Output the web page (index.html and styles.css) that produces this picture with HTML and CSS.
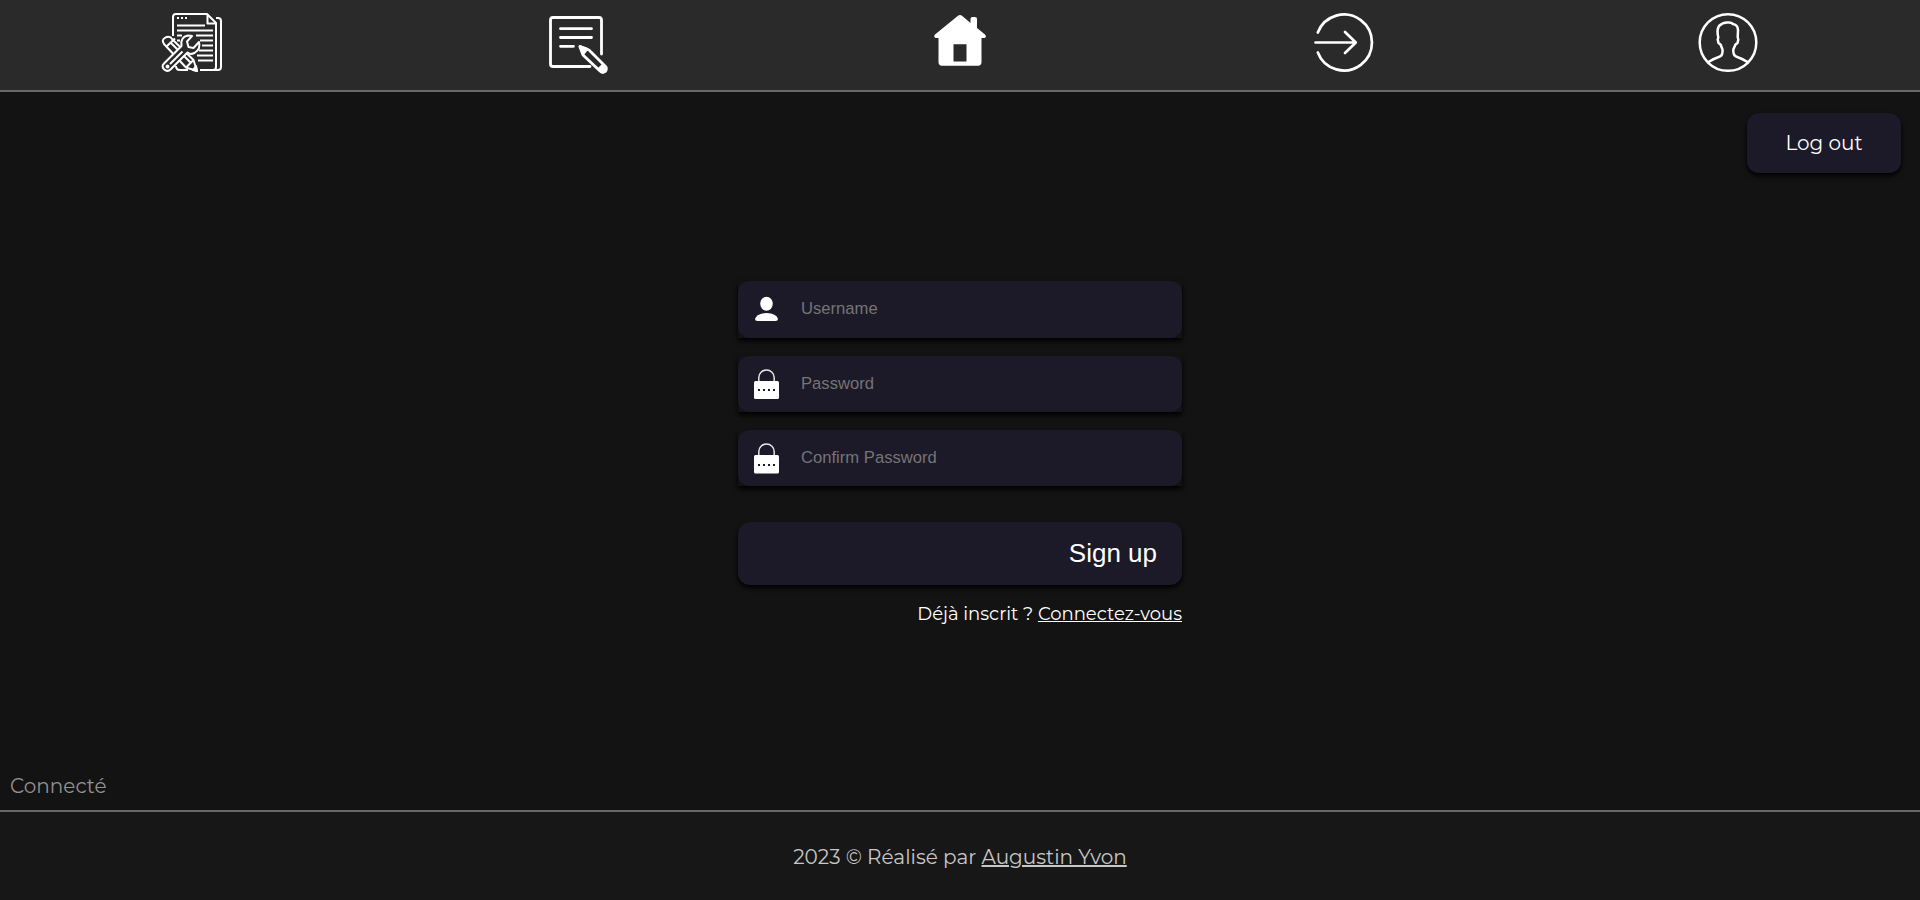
FILE: index.html
```html
<!DOCTYPE html>
<html lang="fr">
<head>
<meta charset="utf-8">
<title>Sign up</title>
<link rel="stylesheet" href="styles.css">
</head>
<body>
<nav class="nav">
  <a class="nav-item"><svg class="nav-icon" viewBox="-3 0 90 90">
    <g fill="none" stroke="#fff" stroke-width="2" stroke-linejoin="round">
      <path d="M23 36V17q0-3 3-3H57L66 23V67q0 3-3 3H50"/>
      <path d="M57.500 14V23.500H66"/><path d="M66 18H68q3 0 3 3V67q0 3-3 3H63M26 66q0 4 4 4h8"/>
      <path d="M27 18h2m2 0h2m2 0h2M27 25.500H55M27 30.500H63M27 35.500H32M46 35.500H63M27 40.500h3M50 40.500H63M52 45.500H63M49 50.500H63M47 55.500H63M48 60.500H63"/>
      <path class="tool" d="M14 44Q11 40 15.500 37.500Q20 35.500 22.500 39.500L43.500 60L47 71L36 67.500ZM16.500 46.500L25 38.500M20.500 42.500L41 63M36 67.500L43.500 60"/>
      <path fill="#fff" d="M43 70L46 66L47 71Z"/>
      <path class="tool" d="M14 63.500L31.500 46Q30 37 38 35.500L42 36L37 41.500L38.500 47L43.500 48L49 42Q51 49 44.500 53Q40 55 37.500 52.500L21 69Q17.500 72.500 14.300 69.500Q11 66.500 14 63.500Z"/>
      <path d="M20 64L32.500 51.500"/><circle cx="17.500" cy="66.500" r="1"/>
    </g></svg></a>
  <a class="nav-item"><svg class="nav-icon" viewBox="-4 0 90 90">
    <g fill="none" stroke="#fff" stroke-width="2.800" stroke-linecap="round" stroke-linejoin="round">
      <path d="M55 66.500H18Q15.500 66.500 15.500 64V20Q15.500 17.500 18 17.500H64Q66.500 17.500 66.500 20V54"/>
      <path d="M25.500 28.700H56.500M25.500 37.500H56.500M25.500 46.300H38.500"/>
      <path class="pencil" d="M45 46.500L54 50L71 67Q72 71 69 72Q67 73 65 71L48 55Z"/>
      <path fill="#fff" d="M45 46.500L52 49L48 54ZM64 69L68 65L71 68Q71 72 67 72Z"/>
    </g></svg></a>
  <a class="nav-item"><svg class="nav-icon" viewBox="-5 0 90 90">
    <path fill="#fff" fill-rule="evenodd" d="M38 15.800Q40 14 42 15.800L50.500 23V19Q50.500 17 52.500 17H55Q57 17 57 19V28L65 34.500Q67 37 64.500 38H61.500V62Q61.500 65.700 58 65.700H22Q18.500 65.700 18.500 62V38H16Q13 37 15 34.500ZM33.500 44.300V61.500H46.500V44.300Z"/></svg></a>
  <a class="nav-item"><svg class="nav-icon" viewBox="-1 0 90 90">
    <g fill="none" stroke="#fff" stroke-width="2.700" stroke-linecap="round" stroke-linejoin="round">
      <path d="M17.800 32.500A28 28 0 1 1 17.800 52.500"/><path d="M15.500 42.500H55.500M45 32L55.800 42.500L45 53"/>
    </g></svg></a>
  <a class="nav-item"><svg class="nav-icon" viewBox="-2 0 90 90">
    <g fill="none" stroke="#fff" stroke-width="2.500" stroke-linejoin="round">
      <circle cx="43" cy="42.500" r="28.300"/>
      <path d="M22.500 62.500Q29 58.500 35 56.500Q38 55 37.500 49.500L35.500 44.500L33.500 43L32.700 39.500L33.300 37.500Q31.500 30 34 26Q38 22 43 22.500Q46 22 48 24Q53 25 53 30L52.700 37.500L53.300 39.500L52.500 43L50.500 44.500L48.300 49.500Q48 55 51 56.500Q58 59 63.500 62.500"/>
    </g></svg></a>
</nav>
<main class="main">
  <button class="logout">Log out</button>
  <form class="form">
    <label class="field field-first"><svg class="field-icon" viewBox="0 0 30 40"><g fill="#fff"><ellipse cx="15.500" cy="14.700" rx="6.300" ry="7"/><path d="M4 30Q5.500 24.500 15.500 24Q25.500 24.500 27 30Q27 32 24.500 32H6.500Q4 32 4 30Z"/></g></svg><input class="input" type="text" placeholder="Username"></label>
    <label class="field"><svg class="field-icon" viewBox="0 0 30 40"><path class="shackle" d="M7.800 17V13.500A7.700 7.500 0 0 1 23.200 13.500V17"/><rect x="3" y="17" width="25" height="18" rx="1.500" fill="#fff"/><path class="dots" d="M7 26h2m3 0h2m3 0h2m3 0h2"/></svg><input class="input" type="password" placeholder="Password"></label>
    <label class="field"><svg class="field-icon" viewBox="0 0 30 40"><path class="shackle" d="M7.800 17V13.500A7.700 7.500 0 0 1 23.200 13.500V17"/><rect x="3" y="17" width="25" height="18.500" rx="1.500" fill="#fff"/><path class="dots" d="M7 27h2m3 0h2m3 0h2m3 0h2"/></svg><input class="input" type="password" placeholder="Confirm Password"></label>
    <button class="submit" type="button">Sign up</button>
    <p class="hint">Déjà inscrit ? <a class="link">Connectez-vous</a></p>
  </form>
  <p class="status">Connecté</p>
</main>
<footer class="footer"><p class="credit">2023 © Réalisé par <a class="link">Augustin Yvon</a></p></footer>
</body>
</html>
```
FILE: styles.css
```css
* { box-sizing: border-box; }
body {
  margin: 0;
  height: 900px;
  display: flex;
  flex-direction: column;
  overflow: hidden;
  background: #131313;
  color: #fff;
  font-family: Montserrat, Inter, sans-serif;
}
p { margin: 0; }
.nav {
  display: grid;
  grid-template-columns: repeat(5, 1fr);
  height: 92px;
  flex: none;
  background: #2a2a2a;
  border-bottom: 2px solid #696969;
}
.nav-item { display: flex; justify-content: center; }
.nav-icon { width: 90px; height: 90px; display: block; }
.tool, .pencil { fill: #2a2a2a; }
.main {
  flex: 1;
  display: flex;
  flex-direction: column;
  padding: 21px 19px 0 9px;
}
.logout {
  align-self: flex-end;
  width: 154px;
  height: 60px;
  border: 0;
  border-radius: 12px;
  background: #1c1928;
  box-shadow: 0 3px 5px #000;
  color: #fff;
  font: 20px Montserrat, Inter, sans-serif;
}
.form {
  width: 444px;
  margin: 108px 0 0 729px;
  display: flex;
  flex-direction: column;
}
.field {
  display: flex;
  height: 56px;
  margin-bottom: 18px;
  position: relative;
  background: #131313;
  box-shadow: 0 3px 5px #000;
}
.field-first { height: 57px; }
.field-icon { width: 30px; height: 40px; position: absolute; left: 13px; top: 8px; }
.shackle { fill: none; stroke: #e4e4e8; stroke-width: 1.5; }
.dots { stroke: #1c1928; stroke-width: 2; }
.input {
  flex: 1;
  height: 100%;
  padding: 0 0 0 63px;
  border: 0;
  border-radius: 12px;
  background: #1c1928;
  color: #fff;
  font: 16.640px "Liberation Sans", Arial, sans-serif;
}
.field-first .input { padding-bottom: 2px; }
.input::placeholder { color: #757575; }
.submit {
  height: 63px;
  margin-top: 18px;
  padding: 0 25px 0;
  border: 0;
  border-radius: 12px;
  background: #1c1928;
  box-shadow: 0 3px 5px #000;
  color: #fff;
  font: 26px "Liberation Sans", Arial, sans-serif;
  text-align: right;
}
.hint {
  margin-top: 17px;
  font-size: 18px;
  line-height: 24px;
  text-align: right;
  white-space: nowrap;
}
.link { text-decoration: underline; }
.status {
  margin: auto 0 12px 1px;
  color: #929292;
  font-size: 20px;
  line-height: 24px;
}
.footer {
  flex: none;
  height: 90px;
  border-top: 2px solid #696969;
  background: #171717;
  color: #c8c8c8;
  font-size: 20px;
  line-height: 24px;
  text-align: center;
}
.credit { padding-top: 33px; }
```
